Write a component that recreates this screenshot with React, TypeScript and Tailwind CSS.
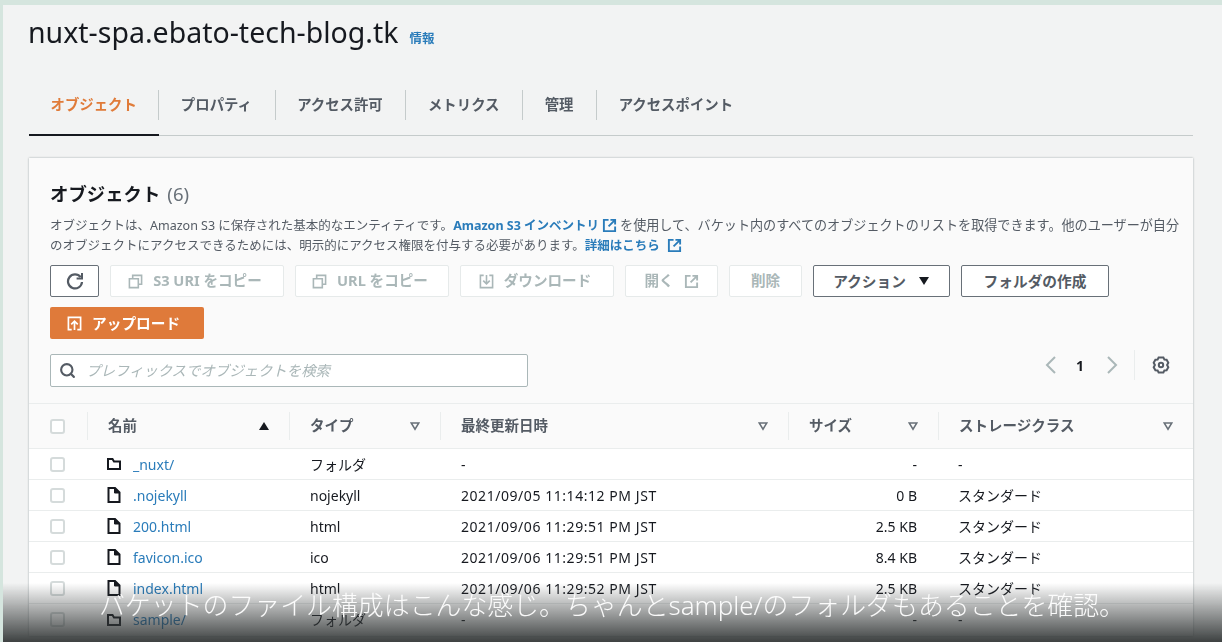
import React from 'react';
import { Search } from 'lucide-react';

const FONT = "font-['Noto_Sans','Noto_Sans_CJK_JP',sans-serif]";

const ExternalIcon = ({ className }: { className?: string }) => (
  <svg viewBox="0 0 16 16" fill="none" stroke="currentColor" strokeWidth="2" className={className}>
    <path d="M7 2H2v12h12V9" />
    <path d="M9 2h5v5M14 2 7 9" />
  </svg>
);

const CopyIcon = () => (
  <svg viewBox="0 0 16 16" fill="none" stroke="currentColor" strokeWidth="1.7" className="w-[15px] h-[15px]">
    <path d="M5 5V1.5h9.5V11H11" />
    <path d="M1.5 5H11v9.5H1.5z" />
  </svg>
);

const DownloadIcon = () => (
  <svg viewBox="0 0 16 16" fill="none" stroke="currentColor" strokeWidth="1.7" className="w-[15px] h-[15px]">
    <path d="M5 1.5H1.5v13h13v-13H11" />
    <path d="M8 1v9M4.5 7 8 10.5 11.5 7" />
  </svg>
);

const UploadIcon = () => (
  <svg viewBox="0 0 16 16" fill="none" stroke="currentColor" strokeWidth="1.8" className="w-[15px] h-[15px]">
    <path d="M5 14.5H1.500v-13h13v13H11" />
    <path d="M8 15V6M4.500 9 8 5.500 11.500 9" />
  </svg>
);

const RefreshIcon = () => (
  <svg viewBox="0 0 18 18" className="w-[18px] h-[18px]" fill="none" stroke="#545b64" strokeWidth="2.2">
    <path d="M14.600 5.200A7 7 0 1 0 16 10" />
    <path d="M16 1v5.400h-5.400" strokeWidth="2" />
  </svg>
);

const GearIcon = () => (
  <svg viewBox="0 0 18 18" className="w-[18px] h-[18px]" fill="none" stroke="#545b64" strokeWidth="2">
    <path d="M6.600 1.600h4.800l1 2 2.200.2 1.700 3-1.200 2.200 1.200 2.200-1.700 3-2.200.2-1 2H6.600l-1-2-2.200-.2-1.700-3L2.900 9 1.700 6.800l1.700-3 2.200-.2z" />
    <circle cx="9" cy="9" r="2.200" />
  </svg>
);

const Chevron = ({ right }: { right?: boolean }) => (
  <svg viewBox="0 0 12 20" className="w-[12px] h-[20px]" fill="none" stroke="#aab7b8" strokeWidth="2">
    <path d={right ? 'M2 2l8 8-8 8' : 'M10 2l-8 8 8 8'} />
  </svg>
);

const FolderIcon = () => (
  <svg viewBox="0 0 14 14" fill="none" stroke="#16191f" strokeWidth="2" className="w-[14px] h-[14px] shrink-0">
    <path d="M1 2h4.500L7 4.500h6V12H1z" />
  </svg>
);

const FileIcon = () => (
  <svg viewBox="0 0 14 16" stroke="#16191f" strokeWidth="2" fill="none" className="w-[14px] h-[16px] shrink-0">
    <path d="M1.500 1h6.500l4.500 4.500V15h-11z" />
    <path d="M7.500 1v5h5" fill="#16191f" strokeWidth="1" />
  </svg>
);

const Caret = () => (
  <svg viewBox="0 0 10 10" className="w-[10px] h-[10px]" fill="none" stroke="#687078" strokeWidth="1.5">
    <path d="M1.200 2h7.600L5 8.200z" />
  </svg>
);

const CaretFilled = ({ down }: { down?: boolean }) => (
  <svg viewBox="0 0 12 10" className="w-[12px] h-[10px]" fill="#16191f">
    <path d={down ? 'M1 1h10L6 9z' : 'M1 9h10L6 1z'} />
  </svg>
);

const Checkbox = () => (
  <span className="block w-[15px] h-[15px] border-2 border-[#d5dbdb] rounded-[3px] bg-white" />
);

const DisabledButton = ({ width, icon, label, after }: { width: string; icon?: React.ReactNode; label: string; after?: React.ReactNode }) => (
  <button className={`${width} h-[32px] flex items-center justify-center gap-[10px] bg-white border border-[#e6eaea] rounded-[2px] text-[#aab7b8] text-[14.600px] font-bold ${icon ? 'pr-[4px]' : ''}`}>
    {icon}
    <span>{label}</span>
    {after}
  </button>
);

const TABS = ['オブジェクト', 'プロパティ', 'アクセス許可', 'メトリクス', '管理', 'アクセスポイント'];

const HEADERS = [
  { label: '名前', active: true, pad: 'pr-[19px]' },
  { label: 'タイプ', pad: 'pr-[20px]' },
  { label: '最終更新日時', pad: 'pr-[20px]' },
  { label: 'サイズ', pad: 'pr-[20px]' },
  { label: 'ストレージクラス', pad: 'pr-[20px]' },
];

const ROWS = [
  { name: '_nuxt/', folder: true, type: 'フォルダ', date: '-', size: '-', cls: '-' },
  { name: '.nojekyll', type: 'nojekyll', date: '2021/09/05 11:14:12 PM JST', size: '0 B', cls: 'スタンダード' },
  { name: '200.html', type: 'html', date: '2021/09/06 11:29:51 PM JST', size: '2.5 KB', cls: 'スタンダード' },
  { name: 'favicon.ico', type: 'ico', date: '2021/09/06 11:29:51 PM JST', size: '8.4 KB', cls: 'スタンダード' },
  { name: 'index.html', type: 'html', date: '2021/09/06 11:29:52 PM JST', size: '2.5 KB', cls: 'スタンダード' },
  { name: 'sample/', folder: true, type: 'フォルダ', date: '-', size: '-', cls: '-' },
];

export default function App() {
  return (
    <div className={`${FONT} relative w-[1222px] h-[642px] overflow-hidden bg-[#f2f3f3] border-t-[5px] border-l-[3px] border-[#d5e5de] text-[#16191f]`}>
      <div className="blur-[0.7px] pl-[26px] pr-[29px]">
        <div className="flex items-baseline gap-[11px] h-[56px] pt-[5px]">
          <h1 className="text-[28.500px] leading-[44px] -ml-[1px] text-[#16191f]">nuxt-spa.ebato-tech-blog.tk</h1>
          <span className="text-[12.500px] font-bold text-[#2a7cba]">情報</span>
        </div>

        <div className="flex mt-[25px] h-[50px] pt-[2px] border-b border-[#c5cbcb]">
          {TABS.map((tab, i) => (
            <div
              key={tab}
              className={`relative h-[48px] pt-[2px] ${i === 0 ? 'border-b-2 border-[#16191f] -mb-[1px]' : ''}`}
            >
              <div
                className={`h-[30px] flex items-center pl-[21.500px] text-[14.400px] font-bold ${i === 0 ? 'pr-[21.500px] text-[#e07b39]' : 'pr-[22.700px] text-[#545b64]'} ${i < TABS.length - 1 ? 'border-r border-[#c5cbcb]' : ''}`}
              >
                {tab}
              </div>
            </div>
          ))}
        </div>

        <div className="mt-[22px] bg-[#fafafa] shadow-[0_0_2px_rgba(0,28,36,0.35)] h-[478px]">
          <div className="px-[21px] pt-[22px]">
            <div className="flex items-baseline gap-[7px] h-[28px]">
              <h2 className="text-[18.400px] font-bold leading-[28px]">オブジェクト</h2>
              <span className="text-[18.500px] text-[#687078]">(6)</span>
            </div>
            <p className="mt-[7px] text-[12.500px] leading-[20px] text-[#545b64] whitespace-nowrap">
              オブジェクトは、Amazon S3 に保存された基本的なエンティティです。
              <a className="font-bold text-[#2a7cba]">Amazon S3 インベントリ</a>
              <ExternalIcon className="inline-block w-[15px] h-[15px] mx-[3px] text-[#2a7cba] align-[-3px]" />
              <span className="text-[13.100px]">を使用して、バケット内のすべてのオブジェクトのリストを取得できます。他のユーザーが自分</span>
              <br />
              のオブジェクトにアクセスできるためには、明示的にアクセス権限を付与する必要があります。
              <a className="font-bold text-[#2a7cba]">詳細はこちら</a>
              <ExternalIcon className="inline-block w-[15px] h-[15px] ml-[7px] text-[#2a7cba] align-[-3px]" />
            </p>

            <div className="flex flex-wrap gap-x-[11px] gap-y-[10px] mt-[9px]">
              <button className="w-[49px] h-[32px] flex items-center justify-center bg-white border border-[#687078] rounded-[2px]">
                <RefreshIcon />
              </button>
              <DisabledButton width="w-[174px]" icon={<CopyIcon />} label="S3 URI をコピー" />
              <DisabledButton width="w-[154px]" icon={<CopyIcon />} label="URL をコピー" />
              <DisabledButton width="w-[154px]" icon={<DownloadIcon />} label="ダウンロード" />
              <DisabledButton width="w-[93px]" label="開く" after={<ExternalIcon className="w-[15px] h-[15px]" />} />
              <DisabledButton width="w-[73px]" label="削除" />
              <button className="w-[137px] h-[32px] flex items-center justify-center gap-[12px] bg-white border border-[#687078] rounded-[2px] text-[14.700px] font-bold text-[#545b64]">
                アクション
                <CaretFilled down />
              </button>
              <button className="w-[148px] h-[32px] flex items-center justify-center bg-white border border-[#687078] rounded-[2px] text-[14.700px] font-bold text-[#545b64]">
                フォルダの作成
              </button>
              <button className="w-[154px] h-[32px] flex items-center pl-[17px] gap-[10px] bg-[#df7a3a] rounded-[2px] text-[14.700px] font-bold text-white">
                <UploadIcon />
                アップロード
              </button>
            </div>

            <div className="flex items-start justify-between mt-[15px] h-[33px]">
              <div className="w-[478px] h-[33px] flex items-center gap-[10px] pl-[8px] bg-white border border-[#aab7b8] rounded-[2px]">
                <Search className="w-[17px] h-[17px] text-[#545b64]" strokeWidth={3} />
                <span className="text-[14.400px] italic text-[#aab7b8]">プレフィックスでオブジェクトを検索</span>
              </div>
              <div className="flex items-center h-[30px] -mt-[4px]">
                <Chevron />
                <span className="w-[49px] pr-[3px] text-center text-[14px] font-bold text-[#16191f]">1</span>
                <Chevron right />
                <div className="h-[30px] ml-[16px] border-l border-[#eaeded] pl-[17px] flex items-center mr-[2px]">
                  <GearIcon />
                </div>
              </div>
            </div>
          </div>

          <div className="mt-[16px] border-t border-[#eaeded]">
            <div className="grid grid-cols-[58px_202px_151px_348px_150px_1fr] h-[45px] items-center border-b border-[#eaeded] text-[14.500px] font-bold text-[#545b64]">
              <div className="pl-[21px]">
                <Checkbox />
              </div>
              {HEADERS.map((h) => (
                <div key={h.label} className={`h-[28px] border-l border-[#eaeded] pl-[20px] flex items-center justify-between ${h.pad}`}>
                  <span>{h.label}</span>
                  {h.active ? <CaretFilled /> : <Caret />}
                </div>
              ))}
            </div>
            {ROWS.map((row) => (
              <div
                key={row.name}
                className="grid grid-cols-[58px_202px_151px_348px_150px_1fr] h-[31px] items-center border-b border-[#eaeded] bg-white text-[14px] last:border-b-0"
              >
                <div className="pl-[21px]">
                  <Checkbox />
                </div>
                <div className="pl-[20px] flex items-center gap-[12px]">
                  {row.folder ? <FolderIcon /> : <FileIcon />}
                  <a className="text-[#2a7cba]">{row.name}</a>
                </div>
                <div className="pl-[21px]">{row.type}</div>
                <div className="pl-[21px] tracking-[0.55px]">{row.date}</div>
                <div className="pr-[21px] text-right">{row.size}</div>
                <div className="pl-[20px]">{row.cls}</div>
              </div>
            ))}
          </div>
        </div>
      </div>

      {/* caption bar over the video frame */}
      <div className="absolute left-[-3px] right-0 bottom-0 h-[59px] bg-gradient-to-b from-[#32363600] to-[#323636f0]" />
      <div className="absolute left-[-3px] right-[-2px] bottom-[19px] text-center text-[25.900px] font-light leading-[36px] text-white/95 whitespace-nowrap">
        バケットのファイル構成はこんな感じ。ちゃんとsample/のフォルダもあることを確認。
      </div>
    </div>
  );
}
